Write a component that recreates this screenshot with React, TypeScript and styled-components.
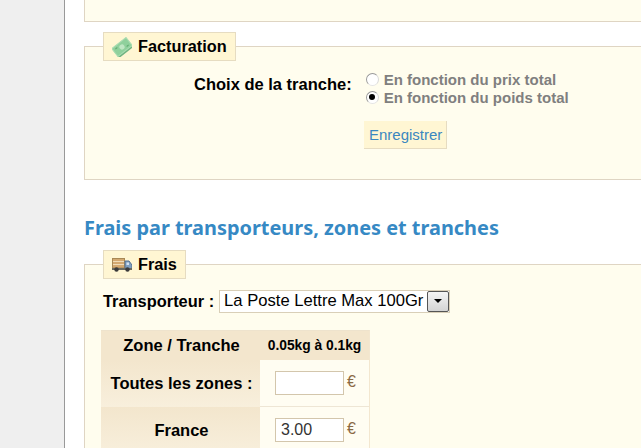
import React from 'react'
import styled, { createGlobalStyle } from 'styled-components'

const GlobalStyle = createGlobalStyle`
  html, body {
    margin: 0;
    padding: 0;
    height: 448px;
    overflow: hidden;
    background: #fff;
    font-family: "Liberation Sans", Arial, sans-serif;
  }
`

const Page = styled.div`
  display: flex;
  width: 641px;
  height: 448px;
  overflow: hidden;
`

const Sidebar = styled.div`
  flex: 0 0 64px;
  background: #efefef;
  border-right: 1px solid #999;
`

const Content = styled.div`
  flex: 0 0 620px;
  margin-left: 19px;
  margin-top: -100px;
`

const Box = styled.fieldset<{ $height: number }>`
  box-sizing: border-box;
  width: 620px;
  height: ${p => p.$height}px;
  margin: 0 0 10px;
  padding: 0 0 0 18px;
  background: #fffdee;
  border: 1px solid #dfd5c3;
`

const Legend = styled.legend`
  display: flex;
  align-items: center;
  gap: 6px;
  box-sizing: border-box;
  height: 29px;
  margin: 0 0 -15px;
  padding: 0 8px;
  background: #fff6d3;
  border: 1px solid #e6dcc1;
  color: #000;
  font-size: 16.3px;
  font-weight: bold;
`

const ChoiceRow = styled.div`
  display: flex;
  margin-top: 24px;
  margin-left: 91px;
`

const ChoiceLabel = styled.div`
  margin-top: 4px;
  margin-right: 14px;
  color: #000;
  font-size: 16.5px;
  font-weight: bold;
  line-height: 20px;
`

const Options = styled.div`
  display: flex;
  flex-direction: column;
`

const Option = styled.label`
  display: flex;
  align-items: center;
  gap: 5px;
  height: 18px;
  color: #7f7f7f;
  font-size: 15px;
  font-weight: bold;
`

const Radio = styled.span<{ $checked?: boolean }>`
  position: relative;
  box-sizing: border-box;
  width: 13px;
  height: 13px;
  background: #fff;
  border: 1px solid #9a9a9a;
  border-right-color: #d8d8d8;
  border-bottom-color: #e4e4e4;
  border-radius: 50%;

  &::after {
    content: '';
    display: ${p => (p.$checked ? 'block' : 'none')};
    position: absolute;
    left: 2.5px;
    top: 2.5px;
    width: 6px;
    height: 6px;
    background: #000;
    border-radius: 50%;
  }
`

const SaveButton = styled.button`
  display: block;
  box-sizing: border-box;
  height: 28px;
  margin: 15px 0 0 261px;
  padding: 0 4px 0 5px;
  background: #fff6d3;
  border: none;
  border-right: 1px solid #e6dcc1;
  border-bottom: 1px solid #e6dcc1;
  color: #3a87c0;
  font-family: inherit;
  font-size: 15px;
`

const Heading = styled.h2`
  margin: 0 0 10px;
  padding-top: 26px;
  color: #3689c4;
  font-family: "Noto Sans", sans-serif;
  font-size: 19.9px;
  font-weight: bold;
  line-height: 24px;
`

const CarrierRow = styled.div`
  display: flex;
  align-items: center;
  height: 24px;
  margin-top: 25px;
  color: #000;
  font-size: 16.4px;
  font-weight: bold;
`

const FakeSelect = styled.div`
  display: flex;
  align-items: center;
  justify-content: space-between;
  box-sizing: border-box;
  width: 231px;
  height: 23px;
  margin-left: 5px;
  padding: 0 0 0 4px;
  background: #fff;
  border: 1px solid #d9cfb8;
  font-size: 16.6px;
  font-weight: normal;
  white-space: nowrap;
`

const SelectArrow = styled.span`
  display: flex;
  flex: 0 0 22px;
  align-items: center;
  justify-content: center;
  box-sizing: border-box;
  height: 21px;
  background: linear-gradient(#f4f4f4, #d4d4d4);
  border: 1px solid #555;
  border-radius: 2px;

  &::after {
    content: '';
    border-left: 4px solid transparent;
    border-right: 4px solid transparent;
    border-top: 4px solid #000;
  }
`

const RateTable = styled.div`
  display: grid;
  grid-template-columns: 159px 109px;
  grid-template-rows: 29px 47px 47px;
  box-sizing: border-box;
  width: 269px;
  margin: 17px 0 0 -2px;
  border-top: 1px solid #eee3cd;
  border-right: 1px solid #f3e7d0;
`

const HeadCell = styled.div<{ $small?: boolean }>`
  display: flex;
  align-items: center;
  justify-content: center;
  padding-left: ${p => (p.$small ? 0 : 2)}px;
  background: #f3e6cd;
  color: #000;
  font-size: ${p => (p.$small ? 13.8 : 16.5)}px;
  font-weight: bold;
`

const RowLabel = styled.div`
  display: flex;
  align-items: center;
  justify-content: center;
  padding-left: 2px;
  background: linear-gradient(#f3e6cd, #f8efdc);
  color: #000;
  font-size: 16.5px;
  font-weight: bold;
`

const PriceCell = styled.div`
  display: flex;
  align-items: center;
  gap: 3px;
  padding-left: 15px;
  background: #fffdf2;
  border-bottom: 1px solid #eee6d5;
`

const PriceInput = styled.input`
  box-sizing: border-box;
  width: 69px;
  height: 24px;
  padding: 0 5px;
  background: #fff;
  border: 1px solid #d3c6ac;
  color: #333;
  font-family: inherit;
  font-size: 16px;
`

const Euro = styled.span`
  margin-bottom: 3px;
  color: #8a6a45;
  font-size: 16px;
`

const BillIcon = () => (
  <svg width="20" height="20" viewBox="0 0 20 20">
    <g transform="rotate(-38 10 10)">
      <rect x="1" y="8" width="17" height="9" fill="#6fb381" />
      <rect x="1" y="5" width="18" height="10" fill="#8fd09c" stroke="#a9dcb2" />
      <circle cx="10" cy="10" r="2.6" fill="#c0e6c4" />
      <path d="M3.5 7.5 H6 M14 12.5 H16.5" stroke="#5fa970" />
    </g>
  </svg>
)

const TruckIcon = () => (
  <svg width="20" height="14" viewBox="0 0 20 14">
    <rect x="0.5" y="0.5" width="12" height="9.5" fill="#d3a870" stroke="#a88855" />
    <path d="M1 3.5 H12 M1 6.5 H12" stroke="#efdcb8" />
    <path d="M13 3 H17 L20 7 V11 H13 Z" fill="#7f9fc0" stroke="#54708f" />
    <rect x="14.5" y="4.5" width="2.5" height="2.5" fill="#d3e2f0" />
    <rect x="0" y="10" width="20" height="2" fill="#6a6a60" />
    <circle cx="4.5" cy="11.5" r="2.2" fill="#3a3a3a" />
    <circle cx="15.5" cy="11.5" r="2.2" fill="#3a3a3a" />
  </svg>
)

const App = () => (
  <Page>
    <GlobalStyle />
    <Sidebar />
    <Content>
      <Box $height={122} />
      <Box $height={148}>
        <Legend>
          <BillIcon />
          Facturation
        </Legend>
        <ChoiceRow>
          <ChoiceLabel>Choix de la tranche:</ChoiceLabel>
          <Options>
            <Option>
              <Radio />
              En fonction du prix total
            </Option>
            <Option>
              <Radio $checked />
              En fonction du poids total
            </Option>
          </Options>
        </ChoiceRow>
        <SaveButton>Enregistrer</SaveButton>
      </Box>
      <Heading>Frais par transporteurs, zones et tranches</Heading>
      <Box $height={300}>
        <Legend>
          <TruckIcon />
          Frais
        </Legend>
        <CarrierRow>
          Transporteur :
          <FakeSelect>
            La Poste Lettre Max 100Gr
            <SelectArrow />
          </FakeSelect>
        </CarrierRow>
        <RateTable>
          <HeadCell>Zone / Tranche</HeadCell>
          <HeadCell $small>0.05kg à 0.1kg</HeadCell>
          <RowLabel>Toutes les zones :</RowLabel>
          <PriceCell>
            <PriceInput />
            <Euro>€</Euro>
          </PriceCell>
          <RowLabel>France</RowLabel>
          <PriceCell>
            <PriceInput defaultValue="3.00" />
            <Euro>€</Euro>
          </PriceCell>
        </RateTable>
      </Box>
    </Content>
  </Page>
)

export default App
